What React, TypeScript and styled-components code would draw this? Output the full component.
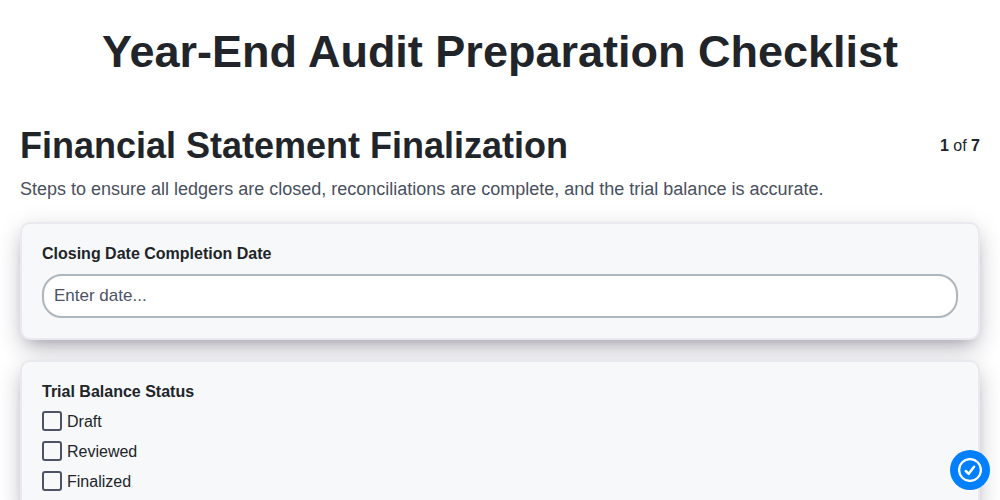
import React, { useState } from "react";
import styled, { createGlobalStyle } from "styled-components";

interface Section {
  title: string;
  description: string;
  statuses: string[];
}

const TOTAL_SECTIONS = 7;

const section: Section = {
  title: "Financial Statement Finalization",
  description:
    "Steps to ensure all ledgers are closed, reconciliations are complete, and the trial balance is accurate.",
  statuses: ["Draft", "Reviewed", "Finalized"],
};

const App: React.FC = () => {
  const [closingDate, setClosingDate] = useState("");
  const [selected, setSelected] = useState<string[]>([]);

  const toggleStatus = (status: string) => {
    setSelected((prev) =>
      prev.includes(status)
        ? prev.filter((item) => item !== status)
        : [...prev, status]
    );
  };

  return (
    <>
      <GlobalStyle />
      <Page>
        <PageTitle>Year-End Audit Preparation Checklist</PageTitle>

        <SectionHeader>
          <SectionTitle>{section.title}</SectionTitle>
          <Counter>
            <b>1</b> of <b>{TOTAL_SECTIONS}</b>
          </Counter>
        </SectionHeader>
        <Description>{section.description}</Description>

        <CardList>
          <Card>
            <Label htmlFor="closing-date">Closing Date Completion Date</Label>
            <DateInput
              id="closing-date"
              placeholder="Enter date..."
              value={closingDate}
              onChange={(e) => setClosingDate(e.target.value)}
            />
          </Card>

          <Card>
            <Label as="div">Trial Balance Status</Label>
            <OptionList>
              {section.statuses.map((status) => (
                <Option key={status}>
                  <Checkbox
                    type="checkbox"
                    checked={selected.includes(status)}
                    onChange={() => toggleStatus(status)}
                  />
                  {status}
                </Option>
              ))}
            </OptionList>
          </Card>
        </CardList>
      </Page>

      <FloatingButton aria-label="Check progress">
        <svg width="24" height="24" viewBox="0 0 24 24" fill="none">
          <circle cx="12" cy="12" r="10.9" stroke="#fff" strokeWidth="2.3" />
          <path
            d="M7.8 13 L10.7 15.8 L16.1 8.7"
            stroke="#fff"
            strokeWidth="2.5"
            strokeLinecap="round"
            strokeLinejoin="round"
          />
        </svg>
      </FloatingButton>
    </>
  );
};

const GlobalStyle = createGlobalStyle`
  * {
    box-sizing: border-box;
  }

  body {
    margin: 0;
    height: 100vh;
    overflow: hidden;
    background-color: #fff;
    color: #212529;
    font-family: "Liberation Sans", Arial, sans-serif;
    font-size: 16px;
  }
`;

const Page = styled.main`
  height: 100vh;
  padding: 20px;
  overflow: hidden;
`;

const PageTitle = styled.h1`
  margin: 0 0 40px;
  font-size: 45px;
  line-height: 63px;
  text-align: center;
`;

const SectionHeader = styled.div`
  display: flex;
  align-items: center;
  justify-content: space-between;
`;

const SectionTitle = styled.h2`
  margin: 0;
  font-size: 36px;
  line-height: 45px;
`;

const Counter = styled.span`
  line-height: 20px;
`;

const Description = styled.p`
  margin: 8px 0 20px;
  color: #495060;
  font-size: 18px;
  line-height: 26px;
`;

const CardList = styled.div`
  display: flex;
  flex-direction: column;
  gap: 20px;
`;

const Card = styled.div`
  padding: 20px;
  border: 2px solid #e9e9ef;
  border-radius: 10px;
  background-color: #f7f8fa;
  box-shadow: 0 13px 27px -5px rgba(50, 50, 93, 0.12),
    0 6px 26px rgba(40, 30, 50, 0.15), 0 8px 16px -8px rgba(10, 5, 30, 0.3);
`;

const Label = styled.label`
  display: block;
  margin-bottom: 10px;
  font-weight: 700;
  line-height: 20px;
`;

const DateInput = styled.input`
  display: block;
  width: 100%;
  height: 44px;
  padding: 0 10px;
  border: 2px solid #adb5bd;
  border-radius: 20px;
  background-color: #fff;
  color: #212529;
  font-family: inherit;
  font-size: 17px;
  outline: none;

  &::placeholder {
    color: #4d5266;
    opacity: 1;
  }
`;

const OptionList = styled.div`
  display: flex;
  flex-direction: column;
  gap: 10px;
  margin-top: -1px;
`;

const Option = styled.label`
  display: flex;
  align-items: flex-start;
  gap: 5px;
  height: 20px;
  line-height: 22px;
`;

const Checkbox = styled.input`
  appearance: none;
  width: 20px;
  height: 20px;
  margin: 0;
  border: 2px solid #4d5266;
  border-radius: 3px;

  &:checked {
    background-color: #4d5266;
  }
`;

const FloatingButton = styled.button`
  position: fixed;
  right: 10px;
  bottom: 10px;
  display: flex;
  align-items: center;
  justify-content: center;
  width: 40px;
  height: 40px;
  padding: 0;
  border: none;
  border-radius: 50%;
  background-color: #007fff;
  cursor: pointer;
`;

export default App;
